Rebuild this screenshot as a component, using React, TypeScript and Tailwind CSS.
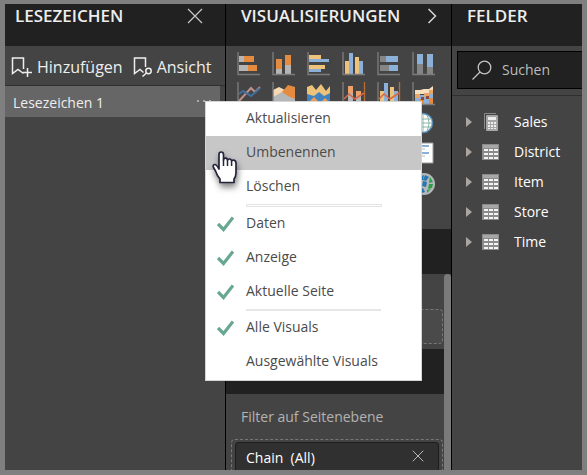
import React from "react";

const AXIS = "#7b7b7b";
const ORANGE = "#e58b3f";
const BLUE = "#8db0d8";
const YELLOW = "#edc27a";
const GREY = "#b5b5b5";

function Tile({ className = "", children }: { className?: string; children: React.ReactNode }) {
  return (
    <svg viewBox="0 0 24 24" className={`size-6 ${className}`} fill="none" aria-hidden="true">
      {children}
    </svg>
  );
}

const Axes = () => <path d="M1 0V22.5H23" stroke={AXIS} strokeWidth="1.4" />;

function Gallery() {
  return (
    <div className="grid h-[183px] grid-cols-[repeat(6,35px)] auto-rows-[30px] pt-1.5 pl-[11px]">
      <Tile>
        <path d="M2 4h5v6H2zM2 13h9v6H2z" fill={GREY} />
        <path d="M7 4h10v6H7zM11 13h9v6h-9z" fill={ORANGE} />
        <Axes />
      </Tile>
      <Tile>
        <path d="M4 17h6v5H4zM13 13h6v9h-6z" fill={GREY} />
        <path d="M4 7h6v10H4zM13 3h6v10h-6z" fill={ORANGE} />
        <Axes />
      </Tile>
      <Tile>
        <path d="M2 3h12v4H2zM2 13h16v4H2z" fill={YELLOW} />
        <path d="M2 7h20v3H2zM2 17h12v3H2z" fill={BLUE} />
        <Axes />
      </Tile>
      <Tile>
        <path d="M3 9h4v13H3zM13 5h4v17h-4z" fill={YELLOW} />
        <path d="M7 1h4v21H7zM17 9h4v13h-4z" fill={BLUE} />
        <Axes />
      </Tile>
      <Tile>
        <path d="M3 4h6v6H3zM3 13h9v6H3z" fill="#858585" />
        <path d="M9 4h12v6H9zM12 13h9v6h-9z" fill={BLUE} />
        <Axes />
      </Tile>
      <Tile>
        <path d="M5 12h6v10H5zM15 15h6v7h-6z" fill="#858585" />
        <path d="M5 2h6v10H5zM15 2h6v13h-6z" fill={BLUE} />
        <Axes />
      </Tile>
      <Tile>
        <Axes />
        <path d="M2 19 14 6l4 4 5-5" stroke="#bf9186" strokeWidth="2" />
        <path d="m2 12 4-3 8 5 9-8" stroke="#426f9f" strokeWidth="2" />
      </Tile>
      <Tile>
        <path d="m1 8 6-3 6 3v15H1z" fill="#f6d9b4" />
        <path d="m10 10 6-7 7 2v18H10z" fill={ORANGE} />
        <path d="m1 15 9-5 6 4 7 3v6H1z" fill="#b4b7b8" />
        <Axes />
      </Tile>
      <Tile>
        <path d="M0 5v18h23V4l-4 5-5-7-5 6-4-5z" fill={YELLOW} />
        <path d="m0 12 7 2 5-4 5 4 6-3v12H0z" fill="#4183c2" />
        <path d="m3 19 4-4 4 4-4 4zm11 1 4-4 4 4-4 3z" fill="#ef9e50" />
      </Tile>
      <Tile>
        <path d="M6 4h5v7H6zM14 9h5v5h-5z" fill="#efa16a" />
        <path d="M6 11h5v11H6zM14 14h5v8h-5z" fill={GREY} />
        <Axes />
        <path d="M22.5 0v23" stroke="#b66b35" strokeWidth="1.4" />
        <path d="m2 17 5-5 6 5 9-6" stroke="#d96944" strokeWidth="1.6" />
      </Tile>
      <Tile>
        <path d="M3 9h4v13H3zM13 5h4v17h-4z" fill={YELLOW} />
        <path d="M7 1h4v21H7zM17 9h4v13h-4z" fill={BLUE} />
        <Axes />
        <path d="M22.5 0v23" stroke="#b66b35" strokeWidth="1.4" />
        <path d="m2 17 5-5 6 5 9-6" stroke="#d96944" strokeWidth="1.6" />
      </Tile>
      <Tile>
        <path d="M3 8h5l4-1h5l4-3v8H3z" fill="#f5dfbe" />
        <path d="M3 12h5v4H3zM12 11h5v4h-5zM17 8h4v4h-4z" fill="#e9a468" />
        <path d="M8 13h4v4H8zM17 12h4v4h-4z" fill={BLUE} />
        <path d="M3 16h5v6H3zM12 15h5v7h-5z" fill={BLUE} />
        <path d="M8 17h4v5H8zM17 16h4v6h-4z" fill={ORANGE} />
        <path d="M9 15h3v3H9zM14 14h3v3h-3z" fill="#8a4a3a" />
        <Axes />
      </Tile>
      <Tile className="col-start-6">
        <circle cx="11" cy="11" r="9.5" fill="#fff" stroke="#5689b5" strokeWidth="1.5" />
        <path d="M2 7h18M2 11h18M2 15h18M11 2v18M7 3q-4 8 0 16M15 3q4 8 0 16" stroke="#8bb5a6" />
      </Tile>
      <Tile className="col-start-6">
        <path d="M1 1h20v20H1z" fill="#fff" stroke="#9b9b9b" />
        <path d="M4 4h13M4 11h13" stroke={BLUE} strokeWidth="2" />
        <path d="M4 7h9M4 14h9" stroke="#bbb" />
      </Tile>
      <Tile className="col-start-6">
        <circle cx="12" cy="12" r="11" fill="#b4b8b8" />
        <path d="m7 5 5-2-1 5-5 2zm6-2 4 2-3 4-3-1zM5 12l5-2v5l-4 2zm6-3 4 1-1 5-4-1zM7 18l4-2 2 4-3 1z" fill="#2777b5" />
        <path d="m18 5 3 5-4 1zm-1 7h4l-1 4-4 1zm-2 6 4-1-4 4z" fill="#2e9d49" />
      </Tile>
    </div>
  );
}

function Cross({ className }: { className: string }) {
  return (
    <svg viewBox="0 0 16 16" className={className} fill="none" stroke="currentColor" aria-hidden="true">
      <path d="m1 1 14 14M15 1 1 15" strokeWidth="1.2" />
    </svg>
  );
}

function PanelHeader({ title, children }: { title: string; children?: React.ReactNode }) {
  return (
    <header className="flex h-[42px] items-start justify-between text-[#eee]">
      <h2 className="text-[17px] leading-6 font-semibold">{title}</h2>
      {children}
    </header>
  );
}

function Bookmarks() {
  return (
    <section className="border-r border-black">
      <div className="bg-[#212121] pr-[22px] pl-2.5">
        <PanelHeader title="LESEZEICHEN">
          <button aria-label="Schließen" className="mt-1 text-[#c8c8c8]">
            <Cross className="size-4" />
          </button>
        </PanelHeader>
      </div>
      <div className="flex h-10 items-center gap-2.5 border-b border-[#303030] pt-0.5 pl-1.5 text-base text-[#eee]">
        <button className="flex items-center gap-1">
          <svg viewBox="0 0 22 20" className="h-5 w-[22px]" fill="none" stroke="currentColor" strokeWidth="1.5" aria-hidden="true">
            <path d="M12.5 12V1H1.5v15.5l5.5-4 5.5 4M12 15.5h9M16.5 11v9" />
          </svg>
          Hinzufügen
        </button>
        <button className="flex items-center gap-1">
          <svg viewBox="0 0 20 20" className="size-5" fill="none" stroke="currentColor" strokeWidth="1.5" aria-hidden="true">
            <path d="M12.5 10V1h-11v15.5l5.5-4 3.5 3" />
            <circle cx="15.5" cy="14" r="2.7" />
            <path d="m13.5 16-4 3.5" />
          </svg>
          Ansicht
        </button>
      </div>
      <div className="mr-[5px] flex h-[31px] items-center justify-between bg-[#666] px-2 pt-0.5 text-sm text-[#eee]">
        <span>Lesezeichen 1</span>
        <button aria-label="Weitere Optionen" className="pb-1">
          <svg viewBox="0 0 16 4" className="h-1 w-4" fill="#aaa" aria-hidden="true">
            <path d="M1 1h2v2H1zM7 1h2v2H7zM13 1h2v2h-2z" />
          </svg>
        </button>
      </div>
    </section>
  );
}

function Visualizations() {
  return (
    <section className="flex flex-col border-r border-black">
      <div className="bg-[#212121] pr-3.5 pl-[15px]">
        <PanelHeader title="VISUALISIERUNGEN">
          <button aria-label="Einklappen" className="mt-1 text-[#d5d5d5]">
            <svg viewBox="0 0 10 16" className="h-4 w-2.5" fill="none" stroke="currentColor" strokeWidth="1.5" aria-hidden="true">
              <path d="m1.5 1 7 7-7 7" />
            </svg>
          </button>
        </PanelHeader>
      </div>
      <Gallery />
      <div className="h-[45px] bg-[#212121]" />
      <div className="flex min-h-0 grow">
        <div className="flex min-w-0 grow flex-col">
          <div className="h-[75px] px-[5px] pt-[35px] pr-px">
            <div className="h-[35px] rounded border border-dashed border-[#777] bg-[#4a4a4a]" />
          </div>
          <div className="h-[45px] bg-[#212121]" />
          <h3 className="h-[45px] pt-[13px] pl-[15px] text-sm leading-5 text-[#b3b3b3]">Filter auf Seitenebene</h3>
          <div className="mr-px ml-[5px] grow rounded-t border border-b-0 border-dashed border-[#777] px-[3px] pt-[2px]">
            <div className="flex h-full items-start justify-between rounded-t border border-b-0 border-[#1d1d1d] bg-[#303030] pt-[5px] pr-3.5 pl-2.5 text-sm text-white">
              <span className="leading-5">Chain&nbsp; (All)</span>
              <button aria-label="Filter entfernen" className="mt-0.5 text-[#c8c8c8]">
                <Cross className="size-3" />
              </button>
            </div>
          </div>
        </div>
        <div className="w-[7px] rounded-t bg-[#7a7a7a]" />
      </div>
    </section>
  );
}

const fields = ["Sales", "District", "Item", "Store", "Time"];

function TableIcon() {
  return (
    <svg viewBox="0 0 17 16" className="h-4 w-[17px]" aria-hidden="true">
      <path d="M0 0h17v16H0z" fill="#8b8b8b" />
      <path d="M1 1h15v3H1z" fill="#a7a7a7" />
      <path d="M2 5h4v2H2zm5 0h4v2H7zm5 0h4v2h-4zM2 9h4v2H2zm5 0h4v2H7zm5 0h4v2h-4zM2 13h4v2H2zm5 0h4v2H7zm5 0h4v2h-4z" fill="#f4f4f4" />
    </svg>
  );
}

function CalculatorIcon() {
  return (
    <svg viewBox="0 0 17 18" className="h-[18px] w-[17px]" aria-hidden="true">
      <path d="M2.5 16V.5H14" fill="none" stroke="#888" />
      <rect x="4" y="2" width="12" height="16" rx="1" fill="#a6a6a6" />
      <path d="M6 4h8v3H6zM6 9h2v2H6zm3 0h2v2H9zm3 0h2v2h-2zm-6 3h2v2H6zm3 0h2v2H9zm3 0h2v2h-2zm-6 3h2v1H6zm3 0h2v1H9zm3 0h2v1h-2z" fill="#eee" />
    </svg>
  );
}

function Fields() {
  return (
    <section>
      <div className="bg-[#212121] pl-[15px]">
        <PanelHeader title="FELDER" />
      </div>
      <div className="border-b border-[#303030] pt-[5px] pb-1.5 pl-[5px]">
        <label className="flex h-[38px] items-center gap-2.5 border border-r-0 border-black bg-[#212121] pl-3.5">
          <svg viewBox="0 0 20 20" className="size-5 shrink-0" fill="none" stroke="#c4c4c4" strokeWidth="1.3" aria-hidden="true">
            <circle cx="12.5" cy="7.5" r="6.3" />
            <path d="m8 12-7.5 7.5" />
          </svg>
          <input
            type="text"
            aria-label="Suchen"
            placeholder="Suchen"
            className="w-full min-w-0 bg-transparent text-sm outline-none placeholder:text-[#bdbdbd]"
          />
        </label>
      </div>
      <ul className="pt-[11px]">
        {fields.map((name) => (
          <li key={name}>
            <button className="flex h-[30px] w-full items-center pl-3.5 text-sm text-white">
              <svg viewBox="0 0 6 10" className="mr-2.5 h-2.5 w-1.5" fill="#aaa5a0" aria-hidden="true">
                <path d="M0 0 6 5 0 10z" />
              </svg>
              {name === "Sales" ? <CalculatorIcon /> : <TableIcon />}
              <span className="ml-[15px]">{name}</span>
            </button>
          </li>
        ))}
      </ul>
    </section>
  );
}

function MenuItem({ label, checked, active }: { label: string; checked?: boolean; active?: boolean }) {
  return (
    <button
      role={checked ? "menuitemcheckbox" : "menuitem"}
      aria-checked={checked}
      className={`flex h-[34px] w-full items-center gap-3 pb-0.5 pl-[11px] text-left text-sm text-[#4b4b4b] ${active ? "bg-[#c7c7c7]" : ""}`}
    >
      <span className="w-[17px]">
        {checked && (
          <svg viewBox="0 0 17 16" className="mt-0.5 h-4 w-[17px]" fill="none" stroke="#68a891" strokeWidth="3.2" aria-hidden="true">
            <path d="m1 8 5.5 5.5L16 1.5" />
          </svg>
        )}
      </span>
      {label}
    </button>
  );
}

function ContextMenu() {
  return (
    <div role="menu" className="absolute top-[97px] left-[200px] w-[217px] border border-[#d5d5d5] bg-white pb-px">
      <MenuItem label="Aktualisieren" />
      <MenuItem label="Umbenennen" active />
      <MenuItem label="Löschen" />
      <div className="mr-[39px] ml-10 h-[3px] border border-[#e4e4e4]" />
      <MenuItem label="Daten" checked />
      <MenuItem label="Anzeige" checked />
      <MenuItem label="Aktuelle Seite" checked />
      <div className="mr-10 ml-10 h-0.5 bg-[#e6e6e6]" />
      <MenuItem label="Alle Visuals" checked />
      <MenuItem label="Ausgewählte Visuals" />
      <svg viewBox="0 0 26 34" className="absolute top-[49px] left-1.5 h-[34px] w-[26px] drop-shadow-[1px_4px_3px_rgba(0,0,0,0.5)]" aria-hidden="true">
        <path
          d="M7 18V3.5Q7 1 9.2 1t2.3 2.5V9q.3-2 2.2-1.8 1.8.2 1.8 2.3.3-1.7 2.2-1.5 1.8.2 1.9 2.4.4-1.6 2.2-1.3 2.2.4 2.2 3.2V22q0 3.5-2 6v3.500H8V28Q5 24.500 3.500 20L1.500 16.500Q.5 14 2.600 13.500 4.300 13.200 7 18Z"
          fill="#fff"
          stroke="#24243c"
          strokeWidth="1.7"
          strokeLinejoin="round"
        />
        <path d="M11.5 9v6M15.500 10v5M19.600 11v4" stroke="#24243c" strokeWidth="1.5" />
      </svg>
    </div>
  );
}

export default function App() {
  return (
    <div className="h-screen bg-[#7f7f7f] px-[5px] pt-1 pb-[5px] font-['Open_Sans','Noto_Sans',sans-serif]">
      <main className="relative grid h-full grid-cols-[221fr_226fr_130fr] bg-[#444]">
        <Bookmarks />
        <Visualizations />
        <Fields />
        <ContextMenu />
      </main>
    </div>
  );
}
